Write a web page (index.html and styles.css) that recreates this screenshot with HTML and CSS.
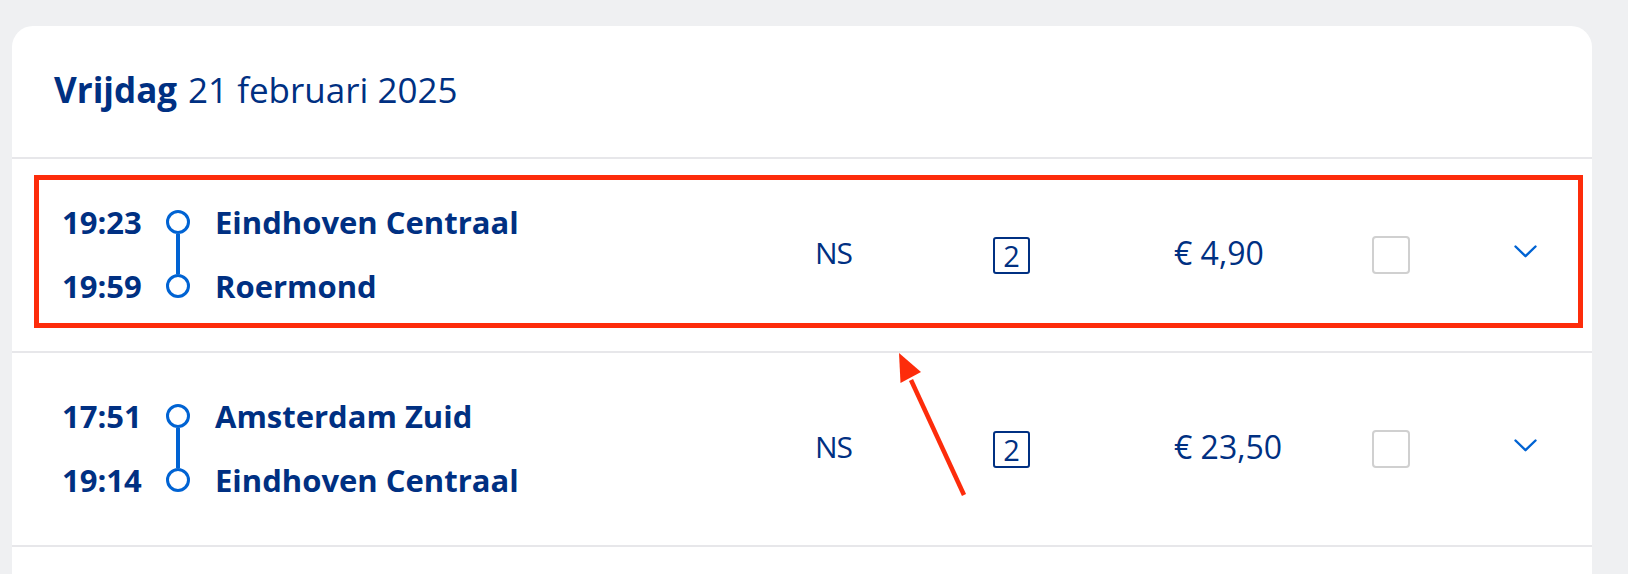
FILE: index.html
```html
<!DOCTYPE html>
<html lang="nl">
<head>
<meta charset="utf-8">
<title>Reizen</title>
<link rel="stylesheet" href="styles.css">
</head>
<body>
<div class="page">
  <section class="card">
    <header class="day-header"><strong>Vrijdag</strong> 21 februari 2025</header>

    <div class="trip trip-highlighted">
      <div class="route">
        <span class="time">19:23</span>
        <span class="track"><span class="dot"></span><span class="line"></span><span class="dot"></span></span>
        <span class="station">Eindhoven Centraal</span>
        <span class="time">19:59</span>
        <span class="station">Roermond</span>
      </div>
      <div class="carrier">NS</div>
      <div class="class-cell"><span class="class-badge">2</span></div>
      <div class="price">€ 4,90</div>
      <div class="check-cell"><span class="checkbox"></span></div>
      <div class="chevron">
        <svg width="23" height="13" viewBox="0 0 23 13"><polyline points="1.5,1.5 11.5,11.2 21.5,1.5" fill="none" stroke="currentColor" stroke-width="2.4" stroke-linecap="round" stroke-linejoin="round"/></svg>
      </div>
      <span class="highlight-box"></span>
    </div>

    <div class="trip">
      <div class="route">
        <span class="time">17:51</span>
        <span class="track"><span class="dot"></span><span class="line"></span><span class="dot"></span></span>
        <span class="station">Amsterdam Zuid</span>
        <span class="time">19:14</span>
        <span class="station">Eindhoven Centraal</span>
      </div>
      <div class="carrier">NS</div>
      <div class="class-cell"><span class="class-badge">2</span></div>
      <div class="price">€ 23,50</div>
      <div class="check-cell"><span class="checkbox"></span></div>
      <div class="chevron">
        <svg width="23" height="13" viewBox="0 0 23 13"><polyline points="1.5,1.5 11.5,11.2 21.5,1.5" fill="none" stroke="currentColor" stroke-width="2.4" stroke-linecap="round" stroke-linejoin="round"/></svg>
      </div>
    </div>

    <div class="trip-rest"></div>
  </section>

  <svg class="arrow" width="1628" height="574" viewBox="0 0 1628 574">
    <line x1="964" y1="495" x2="911" y2="380" stroke="#fd2c0b" stroke-width="4.5" stroke-linecap="butt"/>
    <polygon points="899,353 921,372 900.5,383" fill="#fd2c0b"/>
  </svg>
</div>
</body>
</html>
```

FILE: styles.css
```css
html, body {
  margin: 0;
  padding: 0;
  height: 100%;
  overflow: hidden;
}

body {
  background: #eff0f2;
  font-family: "Open Sans", "Noto Sans", "Liberation Sans", sans-serif;
  color: #003082;
}

.page {
  position: relative;
  padding: 26px 36px 0 12px;
}

.card {
  background: #ffffff;
  border-radius: 21px 21px 0 0;
  min-height: 600px;
}

.day-header {
  height: 133px;
  box-sizing: border-box;
  padding: 0 42px 4px;
  display: flex;
  align-items: center;
  gap: 11px;
  font-size: 35px;
  line-height: 44px;
  font-weight: 400;
  border-bottom: 2px solid #e7e7ea;
}

.day-header strong {
  font-weight: 700;
}

.trip {
  position: relative;
  height: 192px;
  padding-left: 50px;
  display: grid;
  grid-template-columns: 753px 178px 181px 198px 142px 23px;
  align-items: center;
  border-bottom: 2px solid #e7e7ea;
}

.route {
  display: grid;
  grid-template-columns: 80px 24px auto;
  grid-template-rows: 40px 40px;
  row-gap: 24px;
  column-gap: 24px;
  align-items: center;
  margin-top: -3px;
}

.time {
  font-size: 31px;
  line-height: 40px;
  font-weight: 700;
  white-space: nowrap;
}

.station {
  font-size: 31px;
  line-height: 40px;
  font-weight: 700;
  white-space: nowrap;
  margin-left: 1px;
}

.track {
  grid-row: span 2;
  align-self: stretch;
  display: flex;
  flex-direction: column;
  align-items: center;
  padding: 8px 0 8px;
}

.dot {
  width: 24px;
  height: 24px;
  box-sizing: border-box;
  border: 3.5px solid #0063d3;
  border-radius: 50%;
  flex: none;
}

.line {
  flex: 1;
  width: 3.5px;
  background: #0063d3;
}

.carrier {
  font-size: 30px;
  letter-spacing: -1px;
  line-height: 40px;
  white-space: nowrap;
  margin-top: -4px;
}

.price {
  font-size: 32px;
  line-height: 40px;
  white-space: nowrap;
  margin-top: -4px;
}

.class-badge {
  display: flex;
  align-items: center;
  justify-content: center;
  width: 37px;
  height: 37px;
  box-sizing: border-box;
  border: 2px solid #003082;
  border-radius: 3px;
  font-size: 29px;
  line-height: 1;
  margin-top: 1px;
}

.checkbox {
  display: block;
  width: 38px;
  height: 38px;
  box-sizing: border-box;
  border: 2px solid #d0d0d0;
  border-radius: 4px;
  margin-top: 0;
}

.chevron {
  color: #0063d3;
  display: flex;
  align-items: center;
  margin-top: -8px;
}

.chevron svg {
  display: block;
}

.highlight-box {
  position: absolute;
  top: 16px;
  left: 22px;
  right: 9px;
  bottom: 23px;
  border: 5px solid #fd2c0b;
  pointer-events: none;
}

.trip-rest {
  height: 60px;
}

.arrow {
  position: absolute;
  top: 0;
  left: 0;
  pointer-events: none;
}
```
